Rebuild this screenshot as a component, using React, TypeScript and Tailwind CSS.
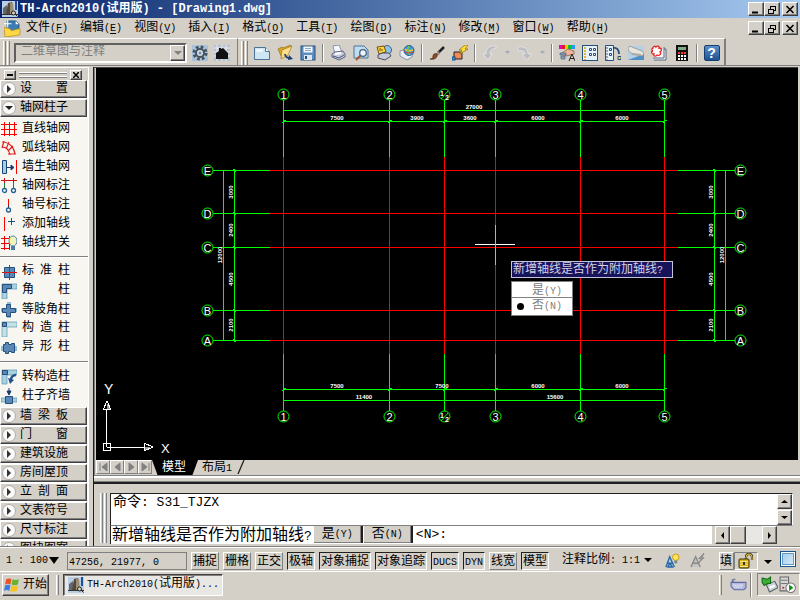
import React from "react";

const FONT = "font-['Liberation_Mono','Noto_Sans_CJK_SC',monospace]";
const RAISED = "border border-t-white border-l-white border-r-[#404040] border-b-[#404040] shadow-[inset_-1px_-1px_0_#808080] bg-[#d4d0c8]";
const SUNKEN = "border border-t-[#202020] border-l-[#202020] border-r-white border-b-white";

/* Latin runs take half the advance of a Chinese character. */
function Txt({ t, latin = "text-[10px]" }: { t: string; latin?: string }) {
  return (
    <span className="whitespace-pre">
      {t.split(/([\x20-\x7e]+)/).map((s, i) => (i % 2 ? <span key={i} className={latin}>{s}</span> : s))}
    </span>
  );
}

function Icon({ children, s = 17 }: { children: React.ReactNode; s?: number }) {
  return (
    <svg width={s} height={s} viewBox="0 0 16 16" className="block shrink-0" aria-hidden="true">
      {children}
    </svg>
  );
}

function AppLogo() {
  return (
    <Icon s={16}>
      <rect width="16" height="16" fill="#b9cfe6" />
      <path d="M1 13V7l4-3v9z" fill="#64686c" />
      <path d="M4 13L6 2l4-1v12z" fill="#55493a" />
      <path d="M8 13V1l3 1 1 11z" fill="#9b8d74" />
      <path d="M14 0v9" stroke="#1d4f9c" strokeWidth="2" />
      <path d="M0 13.5h16" stroke="#333" />
      <circle cx="11.5" cy="12" r="2" fill="#d8d0c0" stroke="#222" />
      <path d="M13 13l2.5 2.5" stroke="#222" />
    </Icon>
  );
}

function WinButtons() {
  const b = `w-4 h-[14px] grid place-items-center ${RAISED}`;
  return (
    <div className="ml-auto flex pr-[2px]">
      <button aria-label="最小化" className={b}>
        <svg width="10" height="9"><path d="M1 7.5h6" stroke="#000" strokeWidth="2" /></svg>
      </button>
      <button aria-label="还原" className={b}>
        <svg width="10" height="9" shapeRendering="crispEdges">
          <path d="M3 1h6M3.5 1v3M8.5 1v5M6 5.5h3M1 4h6M1.5 4v5M6.5 4v5M1 8.5h6" stroke="#000" fill="none" />
        </svg>
      </button>
      <button aria-label="关闭" className={`${b} ml-[2px]`}>
        <svg width="10" height="9"><path d="M1.5 1l7 7M8.5 1l-7 7" stroke="#000" strokeWidth="1.6" /></svg>
      </button>
    </div>
  );
}

const menus: [string, string][] = [
  ["文件", "F"], ["编辑", "E"], ["视图", "V"], ["插入", "I"], ["格式", "O"], ["工具", "T"],
  ["绘图", "D"], ["标注", "N"], ["修改", "M"], ["窗口", "W"], ["帮助", "H"],
];

function Grip({ h = "h-6" }: { h?: string }) {
  const bar = "w-[3px] border-l border-l-white border-r border-r-[#808080]";
  return <div className={`flex gap-px shrink-0 ${h}`}><i className={bar} /><i className={bar} /></div>;
}

function Sep() {
  return <i className="w-[7px] h-[18px] shrink-0 flex justify-center"><i className="w-[2px] bg-[#808080] border-r border-white" /></i>;
}

const tools: Record<string, React.ReactNode> = {
  新建: <><path d="M.5 2.5h11l4 4v8H.5z" fill="#cfe5f2" stroke="#4a7599" /><path d="M11.500 2.500v4h4" fill="#fff" stroke="#4a7599" /><path d="M2 4h7v3H2z" fill="#eaf6fc" /></>,
  打开: <><path d="M1 4l4-2 1 1 8-3-1 4-8 9z" fill="#d9a42c" stroke="#98721d" strokeWidth=".7" /><path d="M5 5l10-4-4 9-7 4z" fill="#ffe08a" stroke="#a17b22" strokeWidth=".7" /><path d="M8 9c0 3 3 4 5 4" fill="none" stroke="#1e3e70" strokeWidth="1.800" /><path d="M12 10l4 4-5 1z" fill="#1e3e70" /></>,
  保存: <><rect x="1" y="1" width="14" height="14" fill="#5d8dc0" stroke="#24507f" /><rect x="3.500" y="1.500" width="9" height="6" fill="#f3f7fb" /><path d="M5 3.500h6M5 5.500h6" stroke="#8ba7c4" /><rect x="4" y="10" width="8" height="5" fill="#dde7f0" /><rect x="5" y="11" width="2" height="3" fill="#24507f" /></>,
  打印: <><path d="M3 1l6-1 3 7-7 2z" fill="#f6f8ff" stroke="#727c9a" strokeWidth=".8" /><path d="M2 9l3-2 8-1 2 3v3l-6 3-7-3z" fill="#c4c9da" stroke="#50587a" strokeWidth=".9" /><path d="M3 11l6 2 5-3" stroke="#50587a" fill="none" /><path d="M5 9l6-1" stroke="#fff" strokeWidth="2" /></>,
  预览: <><path d="M1 1h10l4 4v8H1z" fill="#bfdcf0" stroke="#4a7599" /><circle cx="10" cy="8" r="3.300" fill="#eaf6ff" stroke="#47617d" strokeWidth="1.300" /><path d="M7.500 10.500L3 15" stroke="#a3552a" strokeWidth="2" /></>,
  发布: <><circle cx="11" cy="5" r="4.500" fill="#8ec3e8" stroke="#38638c" /><path d="M1 2l7-1 2 6-7 2z" fill="#ffd33b" stroke="#6b5510" /><path d="M2 10l4-2 7 0 2 3-6 4-7-2z" fill="#c7cad6" stroke="#474c60" /><path d="M4 3v3M6 4v2" stroke="#6b5510" /></>,
  三维: <><path d="M1 6l6-2 7 4-1 4-5 3-7-4z" fill="#e9edf3" stroke="#8a94a4" /><circle cx="10" cy="5.500" r="5" fill="#3d9ad8" stroke="#235a8d" /><path d="M6 4c2 3 5 2 8 1" stroke="#f0c92c" strokeWidth="1.500" fill="none" /><path d="M10 1c-2 3-1 7 1 9" stroke="#7fc25a" strokeWidth="1.500" fill="none" /><path d="M5 6c3 3 6 2 9 1" stroke="#d43a2b" fill="none" /></>,
  特性匹配: <><path d="M15 2l-6 6" stroke="#222" strokeWidth="2.500" /><path d="M10 6l-3 3 1 2 3-2z" fill="#8f8f8f" /><path d="M8 9c-2-1-4 0-4 2 0 2-1 3-3 3 4 1 8-1 7-5z" fill="#8c4a20" stroke="#3c2010" strokeWidth=".6" /></>,
  块编辑器: <><path d="M2 7h8v7H2z" fill="#f28a55" stroke="#222" /><path d="M13 0L7 5h3L8 9l8-5h-3l3-4z" fill="#ffe033" stroke="#8f6a00" strokeWidth=".7" /><rect x="0" y="12" width="3" height="3" fill="#37a3ef" stroke="#134a80" /></>,
  放弃: <path d="M14 1C7 0 4 4 4 9H1l5 6 4-6H8c0-3 1-5 6-6z" fill="#bcbec2" stroke="#f2f2f2" strokeWidth=".6" />,
  重做: <path d="M1 2c7-1 10 2 10 7h4l-5 6-5-6h3C8 6 6 5 1 6z" fill="#bcbec2" stroke="#f2f2f2" strokeWidth=".6" />,
  特性: <><path d="M0 0h3v4H0z" fill="#e400d0" /><path d="M3 0h3v4H3z" fill="#e31b1b" /><path d="M6 0h3v4H6z" fill="#ffc400" /><path d="M9 0h3v4H9z" fill="#0bbd35" /><path d="M12 0h4v4h-4z" fill="#1f9cf0" /><path d="M3 8l6-4 6 2v3l-8 2z" fill="#efb79a" stroke="#8b4c42" strokeWidth=".7" /><path d="M1 8h6v2H1zM2 11h4v3H2z" fill="#8ba4c1" stroke="#37506f" strokeWidth=".6" /><path d="M10 16l3-7 3 7M11 13.500h4" stroke="#222" fill="none" /></>,
  设计中心: <><rect x=".5" y=".5" width="15" height="15" fill="#e6f1fa" stroke="#24507f" /><path d="M3 2v13" stroke="#e3b92b" strokeWidth="2" strokeDasharray="2 1" /><path d="M7.500 3.500h2v2h-2zM11.500 3.500h2v2h-2zM7.500 8.500h2v2h-2zM11.500 8.500h2v2h-2z" fill="#fff" stroke="#24507f" /></>,
  工具选项板: <><path d="M.5.500h8v15h-8z" fill="#e6f1fa" stroke="#24507f" /><path d="M4.500 3.500h2v2h-2zM4.500 8.500h2v2h-2z" fill="#fff" stroke="#24507f" /><path d="M2 2v13" stroke="#557" strokeDasharray="2 1" /><path d="M8 3c4-1 6 2 6 6" stroke="#24507f" fill="none" strokeWidth="1.800" /><path d="M13 11.500h3v3h-3z" fill="#f6dc69" stroke="#24507f" /></>,
  图纸集: <><path d="M0 1h16v14H0z" fill="#b5cfe4" /><path d="M0 15h16V9z" fill="#4f8fc2" /><path d="M0 3c1-2 3-2 4-1l10 4c2 1 2 4 0 5L3 8C1 7 0 5 0 3z" fill="#e5e5de" stroke="#888" strokeWidth=".7" /><path d="M4 9l9 1" stroke="#aaa" strokeWidth="2" /></>,
  标记集: <><path d="M5 4h10v11H3" fill="#f5f5f7" stroke="#52657d" /><path d="M13 2v11H2" stroke="#52657d" fill="#f5f5f7" /><path d="M2 3c0-2 3-2 3-1 2-2 4 0 3 1 3 0 3 3 1 4 2 2-1 4-3 3-1 2-4 1-3-1C0 9 0 6 2 6 0 5 1 3 2 3z" fill="#fff" stroke="#ee2222" strokeWidth="1.300" /></>,
  计算器: <><path d="M2 0h12v16H2z" fill="#111" /><path d="M4 2h8v3H4z" fill="#7faa83" /><path d="M4 8h8" stroke="#f33" strokeWidth="2" strokeDasharray="2 1" /><path d="M4 11h8M4 14h8" stroke="#fff" strokeWidth="2" strokeDasharray="2 1" /></>,
};

function Tool({ n }: { n: string }) {
  return <button aria-label={n} title={n} className="w-[23px] h-6 grid place-items-center shrink-0"><Icon s={16}>{tools[n]}</Icon></button>;
}

function SmallDrop({ n }: { n: string }) {
  return <button aria-label={n} className="w-3 h-6 grid place-items-center shrink-0"><svg width="5" height="3"><path d="M0 0h5L2.500 3z" fill="#9fa9bd" /></svg></button>;
}

function Toolbar() {
  return (
    <div className="h-[28px] flex shrink-0 border-b border-[#808080]">
      <div className="w-[238px] shrink-0 flex items-center pl-[3px] pt-px border-t border-t-white border-r border-r-[#808080]">
        <Grip />
        <div className="relative ml-[4px] w-[173px] h-5 mr-[5px]">
          <select aria-label="工作空间" disabled className={`block appearance-none w-full h-full pl-[5px] pb-[2px] text-[12px] leading-[14px] text-[#808080] opacity-100 bg-[#d4d0c8] ${FONT} border-2 border-t-[#606060] border-l-[#606060] border-r-white border-b-white`}>
            <option>二维草图与注释</option>
          </select>
          <span className={`absolute right-[2px] top-[2px] w-[15px] h-4 grid place-items-center pointer-events-none ${RAISED}`}>
            <svg width="8" height="4"><path d="M0 0h8L4 4z" fill="#808080" /></svg>
          </span>
        </div>
        <button aria-label="工作空间设置">
          <Icon s={16}>
            <path d="M0 0h16v16H0z" fill="#abc3da" />
            <circle cx="8" cy="8" r="6" fill="none" stroke="#46535f" strokeWidth="3" strokeDasharray="2.600 2.100" />
            <circle cx="8" cy="8" r="4" fill="#d9e2e9" stroke="#46535f" strokeWidth="2" /><circle cx="8" cy="8" r="1.500" fill="#6890b3" />
          </Icon>
        </button>
        <button aria-label="我的工作空间" className="ml-[6px]">
          <Icon s={16}>
            <path d="M0 0h16v16H0z" fill="#b5c2d0" /><path d="M0 3h16M0 7h16M0 11h16M3 0v16M8 0v16M12 0v16" stroke="#eee" />
            <path d="M2 14V8l3-2V3h2v1l2-1 5 5v6z" fill="#111" />
          </Icon>
        </button>
      </div>
      <div className="flex items-center pl-[3px] pr-px pt-px border-t border-t-white border-r-2 border-r-[#808080]">
        <Grip />
        <span className="w-[2px]" />
        <Tool n="新建" /><Tool n="打开" /><Tool n="保存" /><Sep />
        <Tool n="打印" /><Tool n="预览" /><Tool n="发布" /><Tool n="三维" /><Sep />
        <Tool n="特性匹配" /><Tool n="块编辑器" /><Sep />
        <Tool n="放弃" /><SmallDrop n="放弃列表" /><Tool n="重做" /><SmallDrop n="重做列表" /><Sep />
        <Tool n="特性" /><Tool n="设计中心" /><Tool n="工具选项板" /><Tool n="图纸集" /><Tool n="标记集" /><Tool n="计算器" /><Sep />
        <button aria-label="帮助" className="w-[23px] grid place-items-center">
          <span className="w-4 h-4 rounded-[2px] border border-[#143e70] bg-linear-to-b from-[#5b90c8] to-[#1c5292] text-white font-bold text-[14px] leading-[14px] text-center font-['Liberation_Sans',sans-serif]">?</span>
        </button>
      </div>
    </div>
  );
}

const steel = "#5b88b5";
const side: Record<string, React.ReactNode> = {
  直线轴网: <path d="M3.500 1v14M8.500 1v14M13.500 1v14M0 3.500h16M0 8.500h16M0 13.500h16" stroke="#f00" />,
  弧线轴网: <path d="M1 2c7 0 12 5 13 12M1 7c4 0 7 3 8 8M3 1L1 8M8 2L5 9M12 6l-5 5M15 14H7" stroke="#e02020" strokeWidth="1.200" fill="none" />,
  墙生轴网: <><path d="M1.500 1.500h4v13h-4z" fill="#a9cbe2" stroke="#1c4878" /><path d="M6 8.500h6M10 6l3 2.500-3 2.500z" stroke="#1c3c70" fill="#1c3c70" /><path d="M15.500 1v14" stroke="#f00" /></>,
  轴网标注: <><path d="M0 2.500h16M3.500 0v5M12.500 0v5" stroke="#d01010" /><path d="M3.500 5v5M12.500 5v5" stroke="#28783a" /><circle cx="3.500" cy="12.500" r="2" fill="#fff" stroke="#235e96" strokeWidth="1.300" /><circle cx="12.500" cy="12.500" r="2" fill="#fff" stroke="#235e96" strokeWidth="1.300" /></>,
  轴号标注: <><path d="M7.500 2v6" stroke="#f00" /><path d="M7.500 8v3" stroke="#333" /><circle cx="7.500" cy="13" r="2" fill="#fff" stroke="#235e96" strokeWidth="1.300" /></>,
  添加轴线: <><path d="M3.500 1v14" stroke="#f00" /><path d="M7 5.500h7M10.500 2v7" stroke="#24507f" /></>,
  轴线开关: <><path d="M3.500 1v14M8.500 1v14M0 3.500h8M0 8.500h8M0 13.500h9" stroke="#e00" /><ellipse cx="12" cy="6" rx="4" ry="5" fill="#eef2c4" stroke="#557fa4" /><path d="M10 11h4v4h-4z" fill="#4f7ba6" /><path d="M10 3c-1 2 0 4 1 6" stroke="#fff68a" strokeWidth="2" fill="none" /></>,
  "标 准 柱": <><path d="M3.500 3.500h10v10h-10z" fill={steel} stroke="#24507f" /><path d="M1 8.500h15M8.500 1v15" stroke="#e01010" /></>,
  "角    柱": <><path d="M1 1h15v5H6v10H1z" fill="#a9d2e0" stroke="#5a93ae" strokeWidth=".7" /><path d="M1.500 1.500h9v4h-5v4h-4z" fill={steel} stroke="#24507f" /></>,
  等肢角柱: <><path d="M0 6h16v4H0zM6 0h4v16H6z" fill="#8fc0d4" /><path d="M1.500 6.500h4v-4h4v4h5v4h-5v4h-4v-4h-4z" fill={steel} stroke="#24507f" /></>,
  "构 造 柱": <><path d="M1 1h15v5H6v10H1z" fill="#c3e2e8" stroke="#5a93ae" strokeWidth=".7" /><path d="M1.500 1.500h4v4h-4z" fill={steel} stroke="#24507f" /></>,
  "异 形 柱": <><path d="M0 6h16v5H0z" fill="#8fc0d4" /><path d="M2.500 4.500h2v-2h3v2h3v-1h3v9h-3v-1h-3v2h-3v-2h-2z" fill={steel} stroke="#24507f" /></>,
  转构造柱: <><path d="M1 1h15v5H6v9H1z" fill="#a9d2e0" stroke="#5a93ae" strokeWidth=".7" /><path d="M1.500 1.500h5v4h-5z" fill={steel} stroke="#24507f" /><path d="M15 6c-3 0-5 2-5 5" fill="none" stroke="#1d5590" strokeWidth="2.500" /><path d="M7 9l2 6 4-4z" fill="#1d5590" /></>,
  柱子齐墙: <><path d="M0 10h16v4H0z" fill="#a9d2e0" stroke="#5a93ae" strokeWidth=".7" /><path d="M4.500 8.500h7v7h-7z" fill={steel} stroke="#24507f" /><path d="M8 0v5M6 3l2 4 2-4z" fill="#173a70" stroke="#173a70" /></>,
};

function SideItem({ n }: { n: string }) {
  return (
    <button className="h-[19px] w-full flex items-center gap-[5px] pl-px text-left shrink-0">
      <Icon s={16}>{side[n]}</Icon><Txt t={n} />
    </button>
  );
}

function SideGroup({ n, open }: { n: string; open?: boolean }) {
  return (
    <button className="h-[19px] w-full pr-px pb-px bg-white shrink-0 block" aria-expanded={!!open}>
      <span className={`h-[18px] flex items-center gap-[4px] pl-px ${RAISED}`}>
        <svg width="14" height="14" aria-hidden="true"><circle cx="7" cy="7" r="6.500" fill="#fafafa" stroke="#b0aca6" />
          {open ? <path d="M3 5h8l-4 4z" fill="#222" /> : <path d="M5 3v8l4-4z" fill="#333" />}
        </svg>
        <Txt t={n} />
      </span>
    </button>
  );
}

function Sidebar() {
  const line = <hr className="my-1 h-[2px] border-0 border-t border-t-[#808080] bg-white shrink-0" />;
  return (
    <nav aria-label="屏幕菜单" className="w-[88px] shrink-0 bg-[#f7f6f0] overflow-hidden flex flex-col text-[12px] leading-[18px]">
      <div className="h-[13px] shrink-0 bg-[#d4d0c8] flex items-end gap-[3px] pl-1 pr-[6px] border-t border-white">
        <button aria-label="折叠" className={`w-3 h-[10px] grid place-items-center ${RAISED}`}><i className="w-[6px] h-[2px] bg-black" /></button>
        <span className="flex-1 h-[6px] mb-[2px] flex flex-col justify-between">
          <i className="h-[2px] border-t border-t-white bg-[#808080]" /><i className="h-[2px] border-t border-t-white bg-[#808080]" />
        </span>
        <button aria-label="关闭菜单" className={`w-3 h-[10px] grid place-items-center ${RAISED}`}>
          <svg width="6" height="6"><path d="M0 0l6 6M6 0L0 6" stroke="#000" strokeWidth="1.500" /></svg>
        </button>
      </div>
      <SideGroup n="设    置" />
      <SideGroup n="轴网柱子" open />
      <div className="pt-px pb-[2px] shrink-0">
        {["直线轴网", "弧线轴网", "墙生轴网", "轴网标注", "轴号标注", "添加轴线", "轴线开关"].map((n) => <SideItem key={n} n={n} />)}
        {line}
        {["标 准 柱", "角    柱", "等肢角柱", "构 造 柱", "异 形 柱"].map((n) => <SideItem key={n} n={n} />)}
        {line}
        {["转构造柱", "柱子齐墙"].map((n) => <SideItem key={n} n={n} />)}
      </div>
      {["墙 梁 板", "门    窗", "建筑设施", "房间屋顶", "立 剖 面", "文表符号", "尺寸标注", "图块图案"].map((n) => <SideGroup key={n} n={n} />)}
    </nav>
  );
}

const cols = [283, 389, 444, 495, 580, 664];
const colNames = ["1", "2", "1/2", "3", "4", "5"];
const rows = [170, 213, 247, 310, 340];
const rowNames = ["E", "D", "C", "B", "A"];

function Bubble({ x, y, n }: { x: number; y: number; n: string }) {
  return (
    <g>
      <circle cx={x + 0.5} cy={y + 0.5} r="5.5" fill="none" stroke="#0f0" />
      {n.length > 1 ? (
        <g fill="#fff" fontSize="7" fontWeight="700" textAnchor="middle">
          <text x={x - 2} y={y + 2}>1</text><text x={x + 3} y={y + 6}>2</text>
          <path d={`M${x + 4} ${y - 3}L${x - 3} ${y + 5}`} stroke="#0f0" />
        </g>
      ) : (
        <text x={x + 0.5} y={y + 4.5} fill="#fff" fontSize="11" textAnchor="middle">{n}</text>
      )}
    </g>
  );
}

function Dim({ x, y, v, up }: { x: number; y: number; v: string; up?: boolean }) {
  return (
    <text x={x} y={y} fill="#fff" fontSize="6" fontWeight="700" textAnchor="middle" transform={up ? `rotate(-90 ${x} ${y})` : undefined}>{v}</text>
  );
}

function Plan() {
  const topDims: [number, string][] = [[337, "7500"], [417, "3900"], [470, "3600"], [538, "6000"], [622, "6000"]];
  const botDims: [number, string][] = [[337, "7500"], [442, "7500"], [538, "6000"], [622, "6000"]];
  const rowDims: [number, string][] = [[192, "3000"], [230, "2400"], [279, "4500"], [325, "2100"]];
  return (
    <svg className="block w-full h-full font-['Liberation_Sans',sans-serif]" role="img" aria-label="轴网平面图">
      <g transform="translate(-96 -68)">
        <g shapeRendering="crispEdges" fill="none">
          {cols.map((x) => (
            <g key={x}>
              <path d={`M${x + 0.5} 100V157M${x + 0.5} 354V411`} stroke="#0f0" />
              <path d={`M${x + 0.5} 157V354`} stroke="#f00" />
            </g>
          ))}
          {rows.map((y) => (
            <g key={y}>
              <path d={`M213 ${y + 0.5}H270M678 ${y + 0.5}H735`} stroke="#0f0" />
              <path d={`M270 ${y + 0.5}H678`} stroke="#f00" />
            </g>
          ))}
          <path d="M283 110.500H665M283 121.500H665M283 389.500H665M283 400.500H665M223.500 170V341M234.500 170V341M714.500 170V341M725.500 170V341" stroke="#0f0" />
          {cols.map((x) => <path key={x} d={`M${x - 1} 122.500h2M${x} 120.500h3M${x - 1} 390.500h2M${x} 388.500h3`} stroke="#0f0" />)}
          {rows.map((y) => <path key={y} d={`M233 ${y - 0.5}h2M234 ${y + 1.5}h2M713 ${y - 0.5}h2M714 ${y + 1.5}h2`} stroke="#0f0" />)}
          <path d="M475 244.500H515" stroke="#fff" />
          <path d="M495.500 225V265" stroke="#0ff" />
          <path d="M103.500 443.500h7v7h-7zM106.500 447V409M107 447.500H145M103.500 409.500h7l-3-8h-1zM144.500 443.500v7l8-3v-1z" stroke="#fff" />
          <path d="M107 403l3 6h-3zM145 447h6l-6 3z" fill="#999" />
        </g>
        {cols.map((x, i) => <g key={x}><Bubble x={x} y={94} n={colNames[i]} /><Bubble x={x} y={416} n={colNames[i]} /></g>)}
        {rows.map((y, i) => <g key={y}><Bubble x={207} y={y} n={rowNames[i]} /><Bubble x={740} y={y} n={rowNames[i]} /></g>)}
        <Dim x={474} y={109} v="27000" />
        {topDims.map(([x, v]) => <Dim key={x} x={x} y={120} v={v} />)}
        {botDims.map(([x, v]) => <Dim key={x} x={x} y={388} v={v} />)}
        <Dim x={364} y={399} v="11400" /><Dim x={555} y={399} v="15600" />
        {rowDims.map(([y, v]) => <g key={y}><Dim x={233} y={y} v={v} up /><Dim x={713} y={y} v={v} up /></g>)}
        <Dim x={222} y={255} v="12000" up /><Dim x={724} y={255} v="12000" up />
        <text x="104" y="394" fill="#fff" fontSize="14">Y</text>
        <text x="161" y="453" fill="#fff" fontSize="13">X</text>
      </g>
    </svg>
  );
}

function Tabs() {
  const nav = ["M3 1v8M10 1L5 5l5 4z", "M9 1L4 5l5 4z", "M4 1l5 4-5 4z", "M10 1v8M3 1l5 4-5 4z"];
  return (
    <div className="h-[15px] shrink-0 flex bg-[#d4d0c8] text-[12px] leading-[16px]">
      {nav.map((d, i) => (
        <button key={d} aria-label={["首个", "上一个", "下一个", "末个"][i]} className="w-[14px] h-[14px] border border-white border-b-[#808080] border-r-[#808080]">
          <svg width="12" height="10"><path d={d} fill="#808080" stroke="#808080" /></svg>
        </button>
      ))}
      <button className="w-[46px] h-[15px] pr-[2px] bg-black text-white [clip-path:polygon(0_0,100%_0,88%_100%,12%_100%)]">模型</button>
      <button className="w-[50px] h-[15px] relative text-left pl-1">
        <Txt t="布局1" />
        <svg className="absolute right-[2px] top-0" width="10" height="14"><path d="M8 0L2 14" stroke="#222" strokeWidth="1.300" /></svg>
      </button>
    </div>
  );
}

function Arrow({ d, label, c }: { d: string; label: string; c: string }) {
  return (
    <button aria-label={label} className={`grid place-items-center shrink-0 ${c} ${RAISED}`}>
      <svg width="7" height="7"><path d={d} fill="#000" /></svg>
    </button>
  );
}

function CommandLine() {
  const opt = "h-[17px] w-[49px] bg-[#d4d0c8] border-r-2 border-r-[#202020] shadow-[inset_-1px_-1px_0_#808080] text-[13px] leading-[16px]";
  return (
    <div className="h-[64px] shrink-0 flex pl-[6px] pt-[9px] border-t-2 border-t-[#202020] bg-[#d4d0c8]">
      <Grip h="h-[50px]" />
      <div className="flex-1 ml-[3px] mr-[7px] min-w-0">
        <div className="h-[33px] flex border border-t-[#202020] border-l-[#202020] border-b-[#808080] border-r-white bg-white">
          <output className="flex-1 pl-[2px] text-[14px] leading-[17px]"><Txt t="命令: S31_TJZX" latin="text-[13px]" /></output>
          <div className="w-[15px] flex flex-col bg-[#e9e7e3]">
            <Arrow label="向上滚动" c="h-[15px]" d="M0 5h7L3.500 2z" /><Arrow label="向下滚动" c="h-[15px] mt-px" d="M0 2h7L3.500 5z" />
          </div>
        </div>
        <div className="h-[18px] flex mr-4 border-l border-l-[#202020] bg-white">
          <label htmlFor="cmd" className="text-[16px] leading-[20px] pl-px shrink-0"><Txt t="新增轴线是否作为附加轴线?" latin="text-[13px]" /></label>
          <button className={`${opt} ml-[2px]`}><Txt t="是(Y)" /></button>
          <button className={`${opt} ml-px`}><Txt t="否(N)" /></button>
          <input id="cmd" defaultValue="<N>:" className="flex-1 min-w-0 pl-[3px] text-[13px] outline-none bg-white" />
          <div className="w-[65px] shrink-0 flex pl-[3px] bg-[#d4d0c8]">
            <Arrow label="向左滚动" c="w-[15px]" d="M5 0v7L2 3.500z" /><span className={`w-[16px] ${RAISED}`} />
            <span className="flex-1 bg-[#e9e7e3]" /><Arrow label="向右滚动" c="w-[15px]" d="M2 0v7l3-3.500z" />
          </div>
        </div>
      </div>
    </div>
  );
}

const modes: [string, boolean, string][] = [
  ["捕捉", false, "w-7"], ["栅格", false, "w-7"], ["正交", false, "w-7"], ["极轴", true, "w-7"], ["对象捕捉", true, "w-[52px]"],
  ["对象追踪", true, "w-[52px]"], ["DUCS", true, "w-7"], ["DYN", true, "w-[22px]"], ["线宽", false, "w-7"], ["模型", true, "w-7"],
];

function StatusBar() {
  const down = <svg width="8" height="5"><path d="M0 0h8L4 4z" fill="#000" /></svg>;
  return (
    <div className="h-[25px] shrink-0 flex items-center border-t border-t-[#808080] shadow-[inset_0_1px_0_#fff] text-[12px] leading-[18px] pt-[3px]">
      <button className="flex items-center gap-px pl-[6px] w-[67px] shrink-0"><Txt t="1 : 100" /><svg width="10" height="7"><path d="M0 0h10L5 7z" fill="#000" /></svg></button>
      <div className="w-[120px] h-[18px] shrink-0 pl-px mr-1 border border-[#808080]"><Txt t="47256, 21977, 0" /></div>
      <div className="flex gap-1 shrink-0">
        {modes.map(([n, on, w]) => (
          <button key={n} aria-pressed={on} className={`${w} h-[18px] flex justify-center leading-[18px] ${on ? SUNKEN : "border border-t-white border-l-white border-r-[#808080] border-b-[#808080]"}`}><Txt t={n} /></button>
        ))}
      </div>
      <button className="ml-[13px] flex items-center gap-[4px] shrink-0"><Txt t="注释比例: 1:1" />{down}</button>
      <button aria-label="注释可见性" className="ml-[13px]">
        <Icon s={15}><path d="M1 15L5 4l5 11M2 11h6M3 15l2-4 3 4z" stroke="#2767a5" strokeWidth="1.500" fill="#b5d3eb" /><circle cx="11.500" cy="4.500" r="3.500" fill="#ffe45a" stroke="#c49a19" /><path d="M10 8h3v3h-3z" fill="#77828c" /></Icon>
      </button>
      <button aria-label="自动缩放" className="ml-[10px]">
        <Icon s={15}><path d="M1 15L6 4l5 11M3 11h6" stroke="#8a8a8a" strokeWidth="1.500" fill="#c5c5c5" /><path d="M15 0L9 6h3l-3 5 6-6h-2z" fill="#999" stroke="#777" strokeWidth=".6" /></Icon>
      </button>
      <button className="ml-auto w-[15px] h-[18px] text-left border border-t-white border-l-white border-b-[#808080] border-r-[#808080]">填</button>
      <button aria-label="锁定" className="w-6 h-[18px] grid place-items-center border border-t-[#808080] border-l-[#808080] border-r-white border-b-white">
        <Icon s={16}><path d="M8 7V4a3 3 0 016 0v3" fill="none" stroke="#3b2f00" strokeWidth="2.200" /><path d="M8 7V4a3 3 0 016 0v3" fill="none" stroke="#e6c84e" /><rect x="1" y="6" width="10" height="9" rx="1" fill="#d9b321" stroke="#3b2f00" /><path d="M2 8.500h8M2 11h8M2 13.500h8" stroke="#fff2a0" strokeWidth=".8" /><path d="M6 9v3" stroke="#000" strokeWidth="1.500" /></Icon>
      </button>
      <button aria-label="状态栏菜单" className="ml-[6px] mt-1">{down}</button>
      <button aria-label="全屏显示" className="ml-2 mr-1 w-4 h-4 mb-1 border border-[#17558f] bg-linear-to-br from-[#9fc8e9] to-[#dceefa] shadow-[inset_0_0_0_1px_#fff,inset_0_0_0_2px_#5f9acb]" />
    </div>
  );
}

function Taskbar() {
  return (
    <div className="h-[29px] shrink-0 flex items-center border-t border-t-white text-[12px] leading-[18px] pl-[2px] pb-[3px]">
      <button className={`w-[47px] h-[22px] flex items-center gap-[2px] pl-px ${RAISED}`}>
        <Icon s={17}>
          <path d="M2 3c2-1 4-1 5 0L6 8C4 7 3 7 1 8z" fill="#ea5426" /><path d="M8 3c2 1 4 1 6 0l-1 5c-2 1-4 1-6 0z" fill="#65b52e" />
          <path d="M1 9c2-1 4-1 5 0l-1 5c-2-1-3-1-5 0z" fill="#3c7ce0" /><path d="M7 9c2 1 4 1 6 0l-1 5c-2 1-4 1-6 0z" fill="#f6c21c" />
        </Icon>
        开始
      </button>
      <i className="ml-[7px] mr-1 w-[3px] h-5 border-l border-l-white border-r border-r-[#808080]" />
      <button className="w-[160px] h-[22px] flex items-center gap-[3px] pl-1 border border-t-[#404040] border-l-[#404040] border-r-white border-b-white bg-[#e9e7e3] whitespace-nowrap shadow-[inset_1px_1px_0_#808080]">
        <AppLogo /><Txt t="TH-Arch2010(试用版)..." />
      </button>
      <div className="ml-auto flex items-center">
        <i className="w-[3px] h-5 border-l border-l-white border-r border-r-[#808080] mr-2" />
        <button aria-label="输入法">
          <Icon s={17}><path d="M4 6c-3-1-2-3 1-3" stroke="#70789c" fill="none" strokeWidth="1.500" /><path d="M1 6h14v5l-2 2H4l-3-3z" fill="#b2b9e0" stroke="#6268a0" /><path d="M3 8.500h10M4 10.500h8" stroke="#fff" strokeWidth="1.200" strokeDasharray="1 1" /></Icon>
        </button>
        <i className="ml-[3px] mr-[5px] w-[2px] h-6 border-l border-l-[#808080] border-r border-r-white" />
        <div className="flex items-center gap-px h-[23px] pl-[3px] pr-[3px] border border-t-[#808080] border-l-[#808080] border-r-white border-b-white">
          <Icon s={17}><path d="M5 8l8-3 3 6-8 4z" fill="#ccd1d7" stroke="#565f69" /><path d="M8 11l5-2" stroke="#fff" strokeWidth="2" /><path d="M1 2l5 1 3-2v6H6L3 9 1 6z" fill="#3cae36" stroke="#176e18" /></Icon>
          <Icon s={17}><path d="M1 1h8v13H1z" fill="#d6d6d6" stroke="#666" /><path d="M2 4h6M2 7h6" stroke="#777" /><circle cx="4" cy="11" r="1" fill="#b33" /><circle cx="11" cy="11" r="4.500" fill="#fff" stroke="#777" /><path d="M9.500 8v6l4-3z" fill="#138a13" /></Icon>
        </div>
      </div>
    </div>
  );
}

export default function App() {
  return (
    <div className={`h-screen min-h-[400px] w-full flex flex-col overflow-hidden bg-[#d4d0c8] text-black ${FONT}`}>
      <header className="h-[18px] shrink-0 flex items-center gap-[2px] pl-[2px] bg-linear-to-r from-[#0a246a] to-[#a6caf0] text-white">
        <AppLogo />
        <h1 className="font-bold text-[12px] leading-[20px]"><Txt t="TH-Arch2010(试用版) - [Drawing1.dwg]" latin="text-[12px]" /></h1>
        <WinButtons />
      </header>
      <div className="h-5 shrink-0 flex items-center pl-1">
        <Icon s={17}>
          <path d="M3 1h8l3 3v9H3z" fill="#3b7cb4" stroke="#1f5688" /><path d="M0 7l5 1 2 2 8-2v6l-14 2z" fill="#ffd84a" stroke="#b58d13" strokeWidth=".7" />
          <path d="M3.500 0v7M0 3.500h7" stroke="#fff" /><path d="M11 1v3h3z" fill="#fff" />
        </Icon>
        <nav aria-label="菜单栏" className="flex gap-3 ml-[5px] text-[12px] leading-[20px]">
          {menus.map(([n, k]) => (
            <button key={k} className="whitespace-nowrap">{n}<span className="text-[10px]">(<u className="underline-offset-2">{k}</u>)</span></button>
          ))}
        </nav>
        <WinButtons />
      </div>
      <Toolbar />
      <div className="flex-1 min-h-0 flex pt-px">
        <Sidebar />
        <div className="w-[5px] shrink-0 border-l border-l-white" />
        <div className="flex-1 min-w-0 flex flex-col border-l border-l-[#202020]">
          <main className="flex-1 min-h-0 flex flex-col pl-px border-t border-t-[#404040] border-l border-l-[#808080] mr-[2px]">
            <div className="relative flex-1 min-h-0 bg-black overflow-hidden">
              <Plan />
              <div className="absolute left-[415px] top-[193px] w-[162px] h-[17px] border border-[#c4c4dc] bg-[#18145c] text-[#d4d0e4] pl-px text-[12px] leading-[17px]"><Txt t="新增轴线是否作为附加轴线?" /></div>
              <div role="menu" className="absolute left-[415px] top-[213px] w-[62px] border border-[#808080] bg-white text-[#808080] text-[12px] leading-[18px] divide-y divide-[#808080]">
                <button role="menuitemradio" aria-checked={false} className="block w-full h-4 text-left pl-5"><Txt t="是(Y)" /></button>
                <button role="menuitemradio" aria-checked className="flex items-center w-full h-[17px] pl-[5px] gap-[8px]"><i className="w-[7px] h-[7px] rounded-full bg-black" /><Txt t="否(N)" /></button>
              </div>
            </div>
            <Tabs />
          </main>
          <div className="h-[7px] shrink-0 border-t border-t-[#808080] shadow-[inset_0_2px_0_#fff] border-b border-b-[#808080]" />
          <CommandLine />
        </div>
      </div>
      <StatusBar />
      <Taskbar />
    </div>
  );
}
